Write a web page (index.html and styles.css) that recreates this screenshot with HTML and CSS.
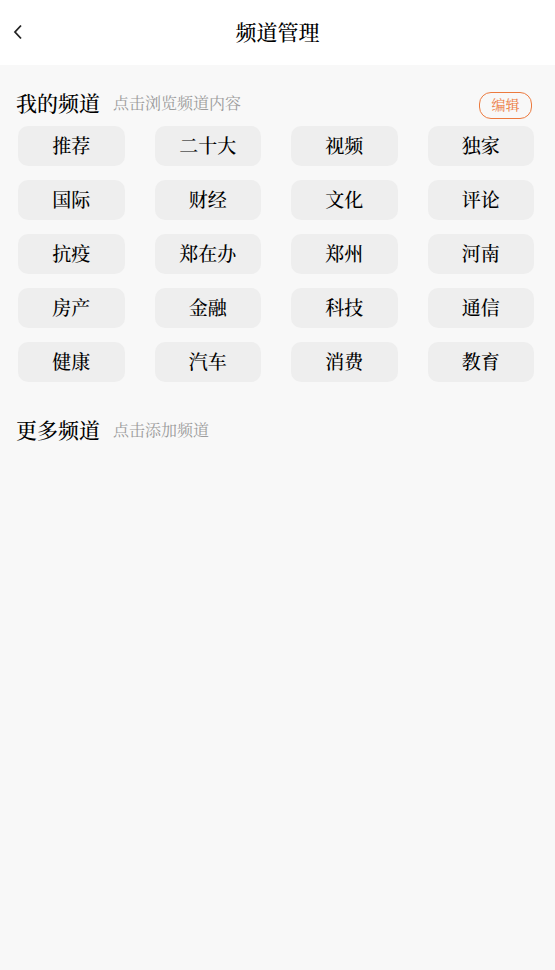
FILE: index.html
```html
<!DOCTYPE html>
<html lang="zh-CN">
<head>
    <meta charset="UTF-8">
    <meta name="viewport" content="width=device-width, initial-scale=1.0">
    <title>频道管理</title>
    <link rel="stylesheet" href="styles.css">
</head>
<body>
    <header class="top-bar">
        <button class="back-btn" aria-label="返回">
            <svg width="10" height="16" viewBox="0 0 10 16">
                <path d="M8 1.5L2 8l6 6.5" fill="none" stroke="#222" stroke-width="1.8" stroke-linejoin="miter"/>
            </svg>
        </button>
        <h1 class="page-title">频道管理</h1>
    </header>

    <main class="content">
        <section class="channel-section">
            <div class="section-head">
                <h2 class="section-title">我的频道</h2>
                <span class="section-tip">点击浏览频道内容</span>
                <button class="edit-btn">编辑</button>
            </div>
            <div class="channel-grid">
                <div class="channel-item">推荐</div>
                <div class="channel-item">二十大</div>
                <div class="channel-item">视频</div>
                <div class="channel-item">独家</div>
                <div class="channel-item">国际</div>
                <div class="channel-item">财经</div>
                <div class="channel-item">文化</div>
                <div class="channel-item">评论</div>
                <div class="channel-item">抗疫</div>
                <div class="channel-item">郑在办</div>
                <div class="channel-item">郑州</div>
                <div class="channel-item">河南</div>
                <div class="channel-item">房产</div>
                <div class="channel-item">金融</div>
                <div class="channel-item">科技</div>
                <div class="channel-item">通信</div>
                <div class="channel-item">健康</div>
                <div class="channel-item">汽车</div>
                <div class="channel-item">消费</div>
                <div class="channel-item">教育</div>
            </div>
        </section>

        <section class="channel-section more">
            <div class="section-head">
                <h2 class="section-title">更多频道</h2>
                <span class="section-tip">点击添加频道</span>
            </div>
        </section>
    </main>
</body>
</html>
```

FILE: styles.css
```css
* {
    box-sizing: border-box;
}

body {
    margin: 0;
    font-family: "Liberation Serif", "Noto Serif CJK SC", serif;
    background-color: #f8f8f8;
    color: #000;
    min-height: 100vh;
}

.top-bar {
    position: relative;
    height: 65px;
    background: #fff;
    display: flex;
    align-items: center;
    justify-content: center;
}

.back-btn {
    position: absolute;
    left: 13px;
    top: 24px;
    padding: 0;
    border: none;
    background: none;
    display: flex;
}

.page-title {
    margin: 0 0 4px;
    font-size: 21px;
    font-weight: 500;
    color: #000;
}

.content {
    padding: 0 21px 0 18px;
}

.channel-section {
    padding-top: 27px;
}

.section-head {
    display: flex;
    align-items: center;
    height: 27px;
    margin-left: -2px;
}

.section-title {
    margin: 0 0 8px;
    font-size: 21px;
    font-weight: 500;
}

.section-tip {
    margin: 0 0 6px 13px;
    font-size: 16px;
    color: #9c9c9c;
}

.edit-btn {
    margin-left: auto;
    margin-right: 2px;
    width: 53px;
    height: 27px;
    padding: 0 0 3px;
    border: 1px solid #ec7a3e;
    border-radius: 12px;
    background: none;
    color: #ec7a3e;
    font-family: inherit;
    font-size: 14px;
}

.channel-grid {
    margin-top: 7px;
    display: grid;
    grid-template-columns: repeat(4, 1fr);
    column-gap: 30px;
    row-gap: 14px;
}

.channel-item {
    height: 40px;
    padding-bottom: 3px;
    border-radius: 10px;
    background: #eeeeee;
    display: flex;
    align-items: center;
    justify-content: center;
    font-size: 19px;
    font-weight: 500;
    color: #000;
}

.channel-section.more {
    padding-top: 37px;
}
```
